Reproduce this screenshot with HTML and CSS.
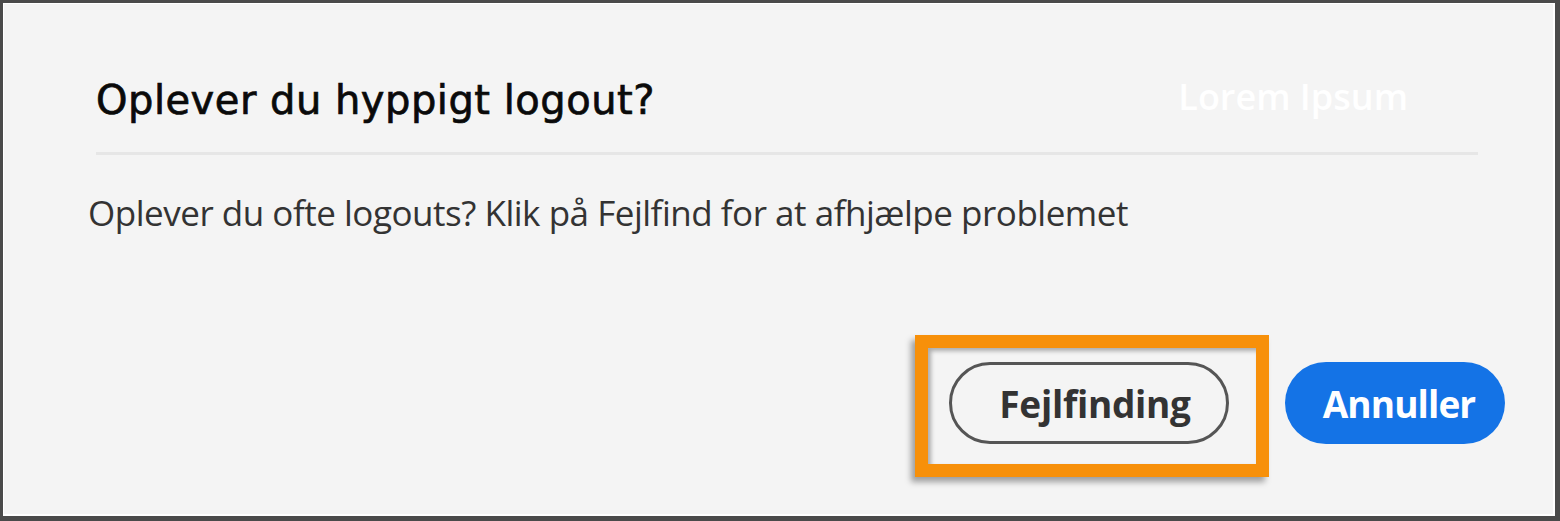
FILE: index.html
```html
<!DOCTYPE html>
<html lang="da">
<head>
<meta charset="utf-8">
<title>Oplever du hyppigt logout?</title>
<link rel="stylesheet" href="styles.css">
</head>
<body>
<div class="frame">
  <div class="dialog">
    <header class="dialog-header">
      <h1 class="dialog-title">Oplever du hyppigt logout?</h1>
      <span class="ghost">Lorem Ipsum</span>
    </header>
    <div class="divider"></div>
    <p class="dialog-text">Oplever du ofte logouts? Klik på Fejlfind for at afhjælpe problemet</p>
    <div class="dialog-actions">
      <div class="highlight">
        <button class="btn btn-secondary" type="button">Fejlfinding</button>
      </div>
      <button class="btn btn-primary" type="button">Annuller</button>
    </div>
  </div>
</div>
</body>
</html>
```

FILE: styles.css
```css
html, body {
  margin: 0;
  padding: 0;
  background: #4a4a4a;
}

.frame {
  width: 1560px;
  height: 521px;
  box-sizing: border-box;
  border-style: solid;
  border-color: #4a4a4a;
  border-width: 3px 5px 5px 3px;
  background: #f4f4f4;
}

.dialog {
  height: 100%;
  box-sizing: border-box;
  background: #f4f4f4;
  box-shadow: inset -2px -2px 0 #ffffff, inset 1px 1px 0 #ffffff;
  padding: 0 50px 0 0;
  display: flex;
  flex-direction: column;
}

.dialog-header {
  display: flex;
  align-items: baseline;
  padding: 77px 0 0 93px;
  height: 76px;
  box-sizing: border-box;
}

.dialog-title {
  margin: 0;
  font-family: "DejaVu Sans", Verdana, sans-serif;
  font-weight: 400;
  font-size: 40px;
  color: #0a0a0a;
  -webkit-text-stroke: 0.7px #0a0a0a;
  letter-spacing: 0.5px;
  line-height: 40px;
}

.ghost {
  margin-left: auto;
  margin-right: 97px;
  font-family: "Open Sans", sans-serif;
  font-weight: 600;
  font-size: 36px;
  color: #ffffff;
  line-height: 40px;
  position: relative;
  top: -4px;
}

.divider {
  margin: 72px 27px 0 93px;
  height: 3px;
  background: #e6e6e6;
}

.dialog-text {
  margin: 38px 0 0 85px;
  font-family: "Open Sans", sans-serif;
  font-size: 35px;
  letter-spacing: -0.48px;
  color: #333333;
  line-height: 40px;
}

.dialog-actions {
  display: flex;
  justify-content: flex-end;
  align-items: flex-start;
  gap: 16px;
  margin-top: 102px;
}

.highlight {
  border: 13px solid #f7900a;
  padding: 14px 27px 20px 21px;
  box-shadow: -4px 5px 6px rgba(0, 0, 0, 0.35), inset 3px 3px 4px rgba(0, 0, 0, 0.3);
}

.btn {
  height: 82px;
  border-radius: 41px;
  font-family: "Open Sans", sans-serif;
  font-weight: 700;
  font-size: 37px;
  letter-spacing: -0.3px;
  box-sizing: border-box;
  padding: 0;
  cursor: pointer;
}

.btn-secondary {
  width: 280px;
  background: #f4f4f4;
  border: 3px solid #555555;
  color: #333333;
  padding-left: 12px;
}

.btn-primary {
  width: 220px;
  margin-top: 27px;
  background: #1473e6;
  border: none;
  color: #ffffff;
  letter-spacing: -0.9px;
  padding-left: 8px;
}
```
